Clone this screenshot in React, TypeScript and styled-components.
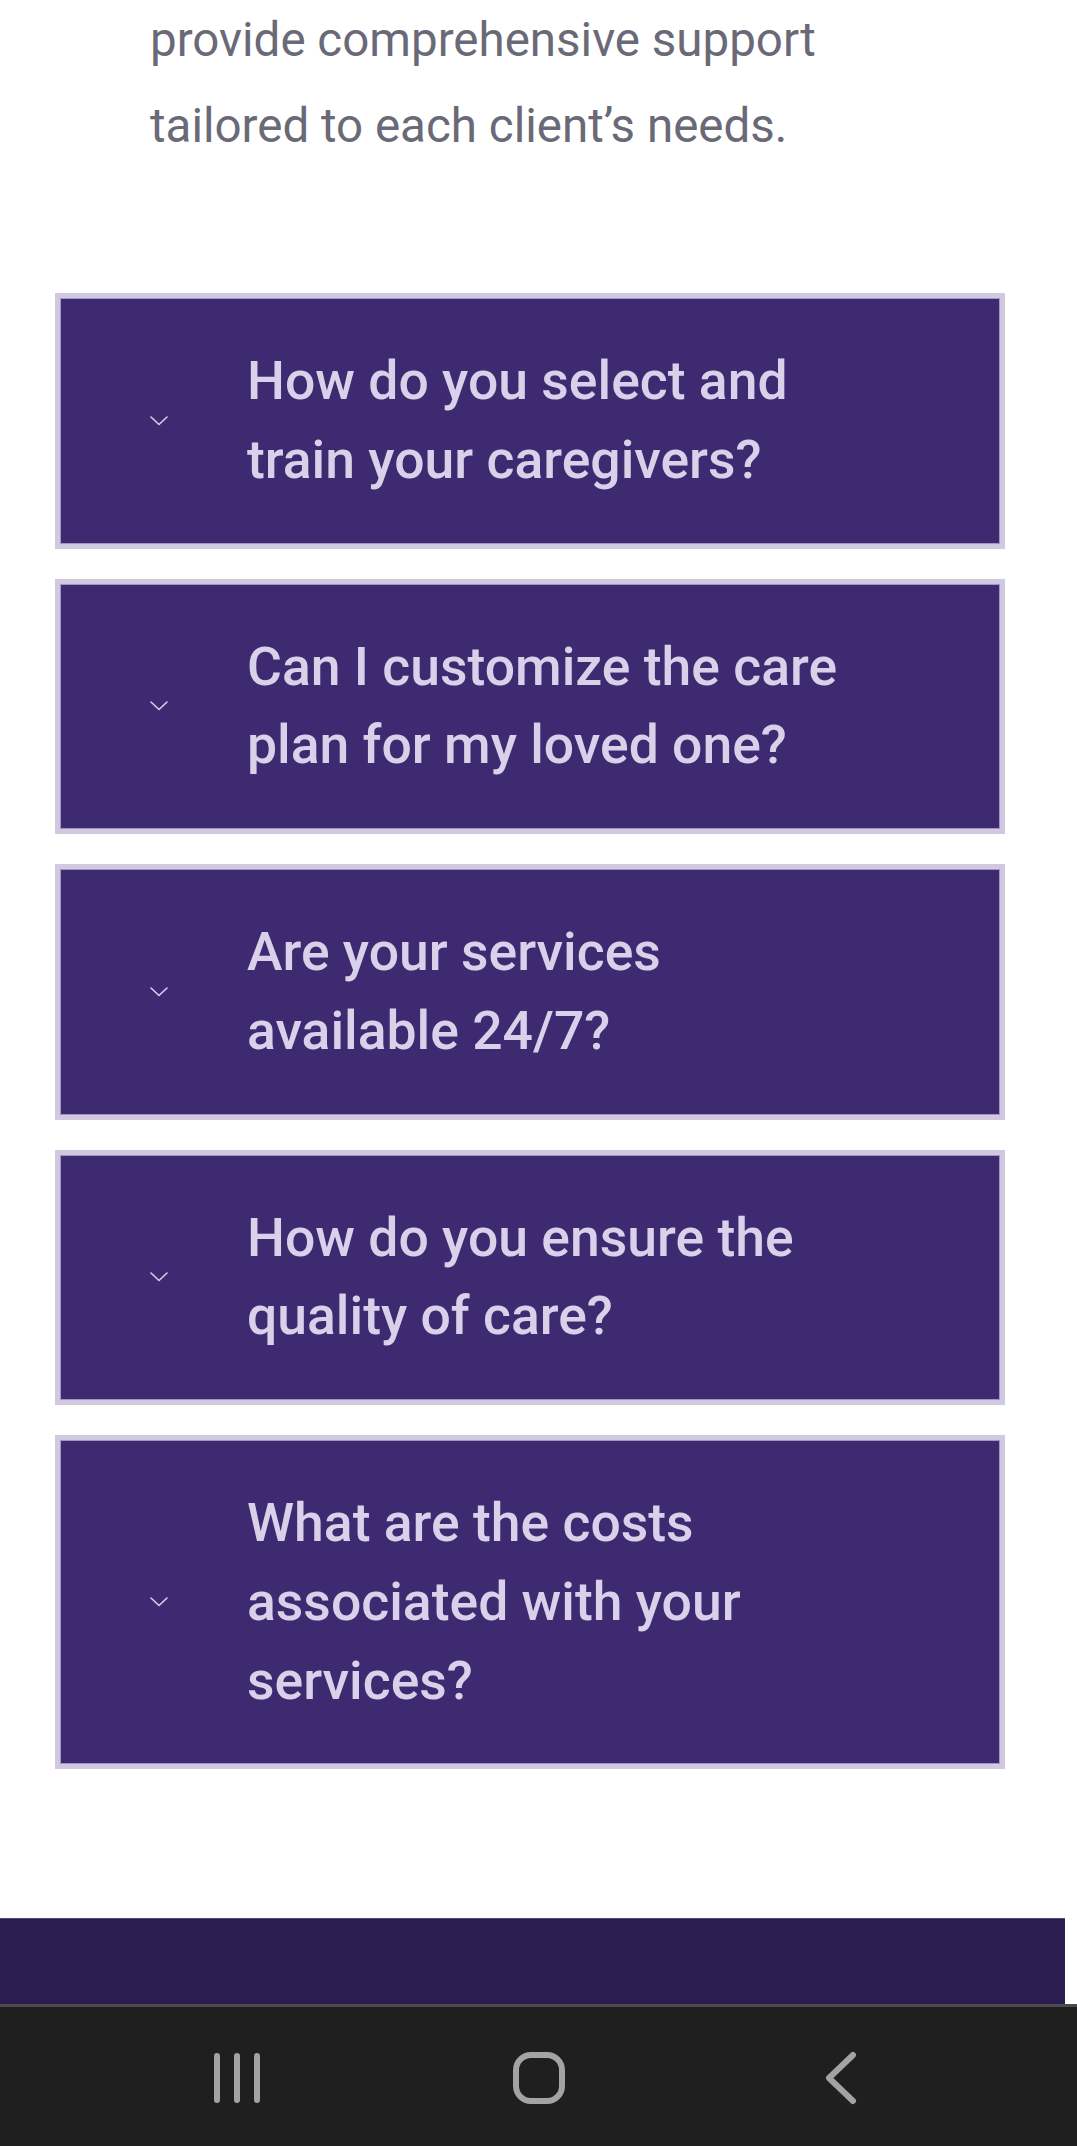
import React from "react";
import styled, { createGlobalStyle } from "styled-components";

const GlobalStyle = createGlobalStyle`
  html, body {
    margin: 0;
    padding: 0;
    background: #ffffff;
  }
  body {
    font-family: Roboto, "Noto Sans", Arial, sans-serif;
    -webkit-font-smoothing: antialiased;
  }
  * { box-sizing: border-box; }
`;

const Page = styled.div`
  width: 1077px;
  display: flex;
  flex-direction: column;
  background: #ffffff;
`;

const Intro = styled.p`
  margin: -3px 0 0 0;
  padding-left: 150px;
  width: 880px;
  font-family: Roboto, Arial, sans-serif;
  font-size: 47.5px;
  font-weight: 400;
  line-height: 86px;
  color: #6a6977;
`;

const FaqList = styled.div`
  display: flex;
  flex-direction: column;
  gap: 30px;
  margin-top: 124px;
  padding-left: 55px;
  width: 1005px;
`;

const FaqItem = styled.div`
  display: flex;
  align-items: center;
  background: #3d2a70;
  border: 5px solid #d1c9e0;
  box-shadow: inset 0 0 0 1px #a293c4;
  padding: 44px 0 44px 90px;
`;

const Chevron = styled.svg`
  flex: none;
  width: 18px;
  height: 10px;
`;

const Question = styled.h3`
  margin: 0 0 0 79px;
  max-width: 620px;
  font-family: Roboto, Arial, sans-serif;
  font-size: 53.5px;
  font-weight: 500;
  line-height: 78.75px;
  color: #d9d0ea;
`;

const Footer = styled.div`
  margin-top: 149px;
  width: 1065px;
  height: 86px;
  background: #2c1d50;
  border-top: 1px solid #55487a;
`;

const NavBar = styled.nav`
  width: 1077px;
  height: 144px;
  background: #1f1f1f;
  border-top: 3px solid #4b4b4f;
  display: flex;
  justify-content: center;
  align-items: center;
`;

const NavSlot = styled.div`
  width: 302px;
  display: flex;
  justify-content: center;
  align-items: center;
`;

const questions = [
  "How do you select and train your caregivers?",
  "Can I customize the care plan for my loved one?",
  "Are your services available 24/7?",
  "How do you ensure the quality of care?",
  "What are the costs associated with your services?",
];

const ChevronDown = () => (
  <Chevron viewBox="0 0 18 10">
    <polyline
      points="1,1 9,8.5 17,1"
      fill="none"
      stroke="#d9cff0"
      strokeWidth="1.6"
      strokeLinecap="round"
      strokeLinejoin="round"
    />
  </Chevron>
);

export default function App() {
  return (
    <Page>
      <GlobalStyle />
      <Intro>
        provide comprehensive support tailored to each client’s needs.
      </Intro>
      <FaqList>
        {questions.map((q) => (
          <FaqItem key={q}>
            <ChevronDown />
            <Question>{q}</Question>
          </FaqItem>
        ))}
      </FaqList>
      <Footer />
      <NavBar>
        <NavSlot>
          <svg width="48" height="52" viewBox="0 0 48 52">
            <g stroke="#a3a3a3" strokeWidth="6" strokeLinecap="round">
              <line x1="4" y1="4" x2="4" y2="48" />
              <line x1="24" y1="4" x2="24" y2="48" />
              <line x1="44" y1="4" x2="44" y2="48" />
            </g>
          </svg>
        </NavSlot>
        <NavSlot>
          <svg width="54" height="54" viewBox="0 0 54 54">
            <rect
              x="4"
              y="4"
              width="46"
              height="46"
              rx="15"
              fill="none"
              stroke="#a3a3a3"
              strokeWidth="6"
            />
          </svg>
        </NavSlot>
        <NavSlot>
          <svg width="36" height="54" viewBox="0 0 36 54">
            <polyline
              points="30,4 6,27 30,50"
              fill="none"
              stroke="#a3a3a3"
              strokeWidth="6"
              strokeLinecap="round"
              strokeLinejoin="round"
            />
          </svg>
        </NavSlot>
      </NavBar>
    </Page>
  );
}
